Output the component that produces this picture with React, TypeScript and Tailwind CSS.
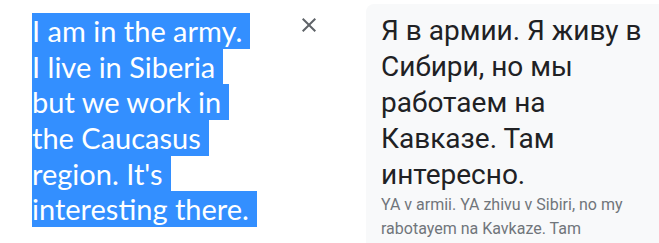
const sourceLines = [
  "I am in the army.",
  "I live in Siberia",
  "but we work in",
  "the Caucasus",
  "region. It's",
  "interesting there.",
];

const CloseIcon = () => (
  <svg viewBox="0 0 24 24" className="w-6 h-6" fill="#5f6368">
    <path d="M19 6.41L17.59 5 12 10.59 6.41 5 5 6.41 10.59 12 5 17.59 6.41 19 12 13.41 17.59 19 19 17.59 13.41 12z" />
  </svg>
);

export default function App() {
  return (
    <div className="flex w-[659px] h-[243px] overflow-hidden bg-white">
      {/* Source text, selected */}
      <div className="w-[297px] shrink-0 pl-8 pt-[13px] font-['Lato',sans-serif] text-[29px] text-white">
        {sourceLines.map((line) => (
          <div key={line} className="w-fit h-[35.7px] leading-[35.7px] bg-[#338fff] pr-[8px] whitespace-nowrap">
            {line}
          </div>
        ))}
      </div>

      <div className="w-6 shrink-0 pt-[13px]">
        <CloseIcon />
      </div>

      {/* Translation */}
      <div className="ml-[45px] mt-[4px] flex-1 rounded-tl-lg bg-[#f8f9fa] pl-[15px] pt-[9px] font-['Roboto',sans-serif]">
        <div className="text-[28px] leading-[36px] text-[#202124] whitespace-nowrap">
          Я в армии. Я живу в
          <br />
          Сибири, но мы
          <br />
          работаем на
          <br />
          Кавказе. Там
          <br />
          интересно.
        </div>
        <div className="text-[16px] leading-[24px] text-[#70757a] whitespace-nowrap">
          YA v armii. YA zhivu v Sibiri, no my
          <br />
          rabotayem na Kavkaze. Tam
        </div>
      </div>
    </div>
  );
}
